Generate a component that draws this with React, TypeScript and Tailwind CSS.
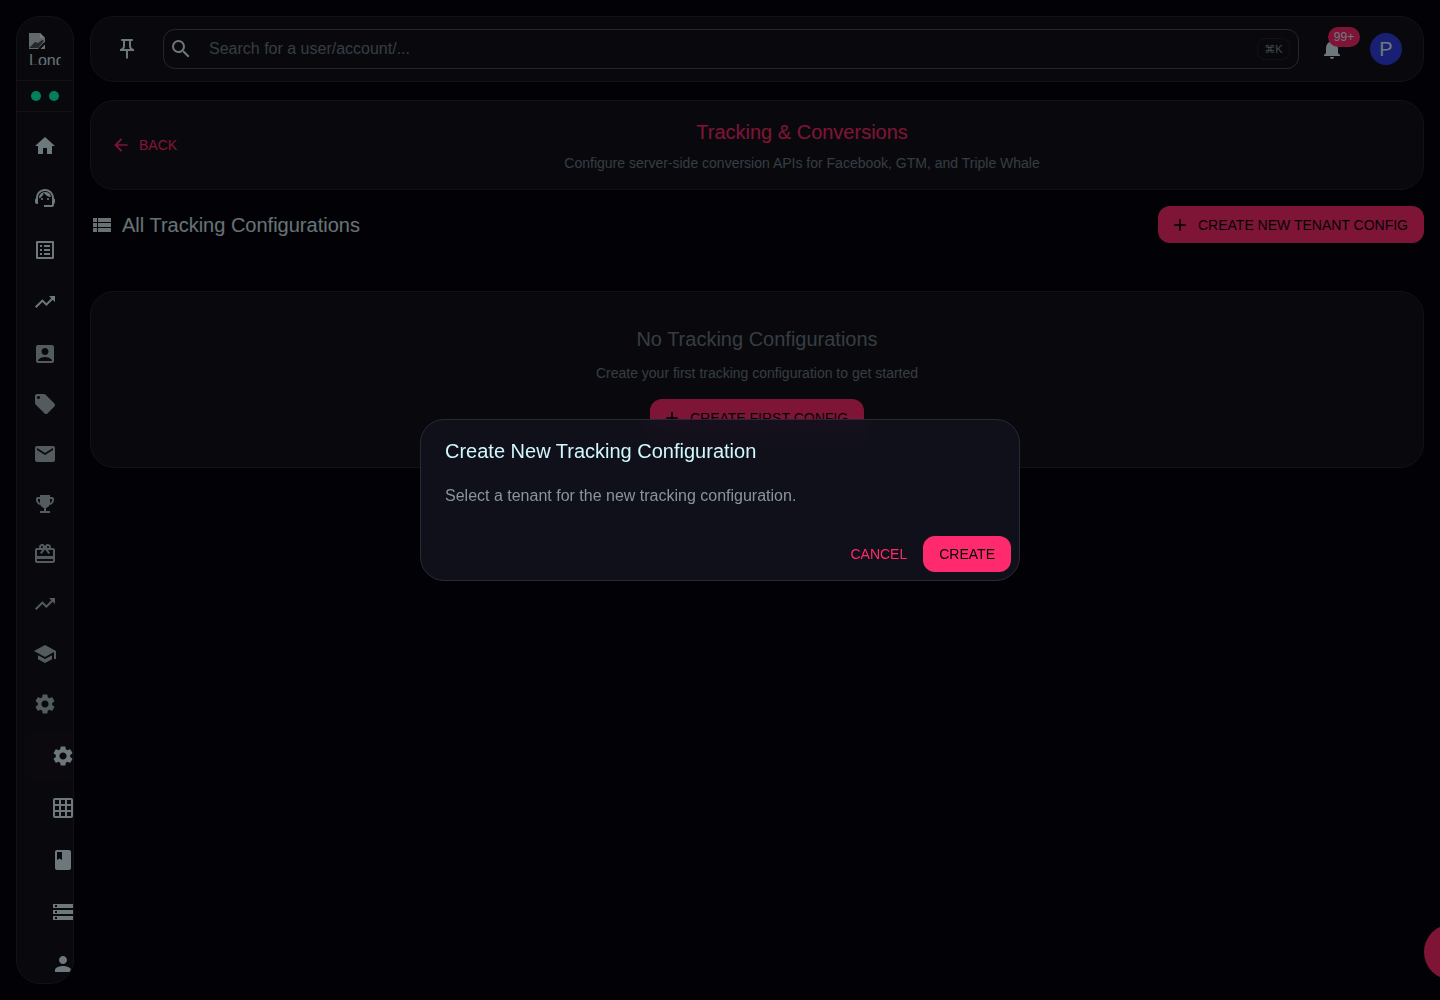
import type { ReactNode } from 'react';
import type { IconType } from 'react-icons';
import {
  MdAccountBox,
  MdAdd,
  MdArrowBack,
  MdBook,
  MdCardGiftcard,
  MdEmail,
  MdEmojiEvents,
  MdGridOn,
  MdHome,
  MdListAlt,
  MdLocalOffer,
  MdNotifications,
  MdOutlinePushPin,
  MdPerson,
  MdSchool,
  MdSearch,
  MdSettings,
  MdStorage,
  MdSupportAgent,
  MdTrendingUp,
  MdViewList,
} from 'react-icons/md';

type NavItem = { label: string; icon: IconType };

const mainLinks: NavItem[] = [
  { label: 'Home', icon: MdHome },
  { label: 'Support', icon: MdSupportAgent },
  { label: 'Reports', icon: MdListAlt },
  { label: 'Trends', icon: MdTrendingUp },
];

const groupLinks: NavItem[] = [
  { label: 'Accounts', icon: MdAccountBox },
  { label: 'Offers', icon: MdLocalOffer },
  { label: 'Email', icon: MdEmail },
  { label: 'Competitions', icon: MdEmojiEvents },
  { label: 'Rewards', icon: MdCardGiftcard },
  { label: 'Performance', icon: MdTrendingUp },
  { label: 'Academy', icon: MdSchool },
  { label: 'Settings', icon: MdSettings },
];

const settingsLinks: NavItem[] = [
  { label: 'General', icon: MdSettings },
  { label: 'Tables', icon: MdGridOn },
  { label: 'Docs', icon: MdBook },
  { label: 'Storage', icon: MdStorage },
  { label: 'Users', icon: MdPerson },
];

function Panel({ className = '', children }: { className?: string; children: ReactNode }) {
  return (
    <section className={`rounded-3xl border border-[#22222c] bg-[#12121b] ${className}`}>
      {children}
    </section>
  );
}

function AddButton({ children }: { children: ReactNode }) {
  return (
    <button
      type="button"
      className="inline-flex h-[37px] items-center gap-2 rounded-xl bg-[#ff2a6d] pl-3 pr-4 text-sm whitespace-nowrap text-[#05050d]"
    >
      <MdAdd size={20} />
      {children}
    </button>
  );
}

function Logo() {
  return (
    <a href="#home" className="block h-8 w-8 overflow-hidden text-base leading-6 text-[#d1e4e8]">
      <svg width="16" height="16" viewBox="0 0 16 16" className="block">
        <path d="M0 0h11l5 5v4L10 16H0z" fill="#c3d0d6" />
        <path d="M11 0v5h5z" fill="#eaf6fa" />
        <path d="M0 15l6-6 3 1 4-3 2 1-6 7z" fill="#4a5257" />
        <path d="M10 16l6-7v7z" fill="#d5e2e6" />
        <path d="M10 16l6-6" stroke="#12121b" strokeWidth="2" />
      </svg>
      <span className="block">London</span>
    </a>
  );
}

function Sidebar() {
  return (
    <aside className="flex w-[58px] shrink-0 flex-col overflow-hidden rounded-3xl border border-[#22222c] bg-[#12121b]">
      <div className="flex h-16 shrink-0 justify-center border-b border-[#22222c] pt-4">
        <Logo />
      </div>
      <div className="flex h-[31px] shrink-0 items-center justify-center gap-2 border-b border-[#22222c]">
        <span className="h-[10px] w-[10px] rounded-full bg-[#05ffbe]" />
        <span className="h-[10px] w-[10px] rounded-full bg-[#05ffbe]" />
      </div>
      <nav className="flex min-h-0 flex-col overflow-hidden pt-[10px]">
        <div className="flex flex-col gap-1">
          {mainLinks.map(({ label, icon: Icon }) => (
            <a key={label} href="#nav" aria-label={label} className="flex h-12 items-center justify-center text-[#d8f1f8]">
              <Icon size={24} />
            </a>
          ))}
        </div>
        <div className="mt-1 flex flex-col gap-[2px]">
          {groupLinks.map(({ label, icon: Icon }) => (
            <a key={label} href="#nav" aria-label={label} className="flex h-12 shrink-0 items-center justify-center text-[#a6b6bc]">
              <Icon size={24} />
            </a>
          ))}
        </div>
        <div className="mt-1 ml-2 flex flex-col gap-1">
          {settingsLinks.map(({ label, icon: Icon }, i) => (
            <a
              key={label}
              href="#nav"
              aria-label={label}
              className={`flex h-12 shrink-0 items-center rounded-l-xl pl-[26px] text-[#d8f1f8] ${i === 0 ? 'bg-[#17131d]' : ''}`}
            >
              <Icon size={24} className="shrink-0" />
            </a>
          ))}
        </div>
      </nav>
    </aside>
  );
}

function TopBar() {
  return (
    <header className="flex items-center rounded-3xl border border-[#22222c] bg-[#12121b] py-3 pl-4 pr-[21px] text-[#d8f1f8]">
      <button type="button" aria-label="Pin sidebar" className="mr-4 flex h-10 w-10 items-center justify-center">
        <MdOutlinePushPin size={24} />
      </button>
      <div className="flex h-10 flex-1 items-center rounded-xl border border-[#4a4a54] pl-[5px] pr-2">
        <MdSearch size={24} className="shrink-0" />
        <input
          type="text"
          aria-label="Search"
          placeholder="Search for a user/account/..."
          className="ml-4 min-w-0 flex-1 bg-transparent text-base outline-none placeholder:text-[#6b7a85]"
        />
        <kbd className="flex h-[22px] w-[33px] items-center justify-center rounded-lg border border-[#22222c] font-[Liberation_Sans,DejaVu_Sans,sans-serif] text-[11px] text-[#7f8f96]">
          ⌘K
        </kbd>
      </div>
      <button type="button" aria-label="Notifications" className="relative ml-[13px] flex h-10 w-10 items-center justify-center">
        <MdNotifications size={24} />
        <span className="absolute -top-[2px] left-4 flex h-5 w-8 items-center justify-center rounded-full bg-[#ff2a6d] text-xs text-[#d8f1f8]">
          99+
        </span>
      </button>
      <button
        type="button"
        aria-label="Account"
        className="ml-[18px] flex h-8 w-8 items-center justify-center rounded-full bg-[#3240e6] text-xl leading-none"
      >
        P
      </button>
    </header>
  );
}

function CreateDialog() {
  return (
    <div className="fixed inset-0 z-20 flex items-center justify-center bg-black/50">
      <div
        role="dialog"
        aria-modal="true"
        aria-labelledby="create-title"
        className="w-full max-w-[600px] rounded-3xl border border-[#2a2a34] bg-[#11111b]/95 backdrop-blur-md"
      >
        <h2 id="create-title" className="px-6 pt-4 pb-[18px] text-xl leading-[30px] text-[#d1f7ff]">
          Create New Tracking Configuration
        </h2>
        <p className="px-6 pb-5 text-base leading-6 text-[#87959f]">
          Select a tenant for the new tracking configuration.
        </p>
        <div className="flex items-center justify-end gap-2 p-2">
          <button type="button" className="h-9 px-2 text-sm text-[#ff2a6d]">
            CANCEL
          </button>
          <button type="button" className="h-9 rounded-xl bg-[#ff2a6d] px-4 text-sm text-[#05050d]">
            CREATE
          </button>
        </div>
      </div>
    </div>
  );
}

export default function App() {
  return (
    <div className="flex h-screen gap-4 overflow-hidden bg-[#05050d] p-4 font-[Liberation_Sans,Arial,sans-serif]">
      <Sidebar />

      <div className="flex min-w-0 flex-1 flex-col">
        <TopBar />

        <main className="mt-[18px]">
          <Panel className="flex items-center gap-2 px-3 py-4">
            <a href="#back" className="flex h-9 items-center gap-2 px-2 text-sm text-[#ff2a6d]">
              <MdArrowBack size={20} />
              BACK
            </a>
            <div className="flex-1 text-center">
              <h1 className="text-xl leading-[30px] text-[#ff2a6d]">Tracking &amp; Conversions</h1>
              <p className="mt-[6px] text-sm leading-5 text-[#6b7a85]">
                Configure server-side conversion APIs for Facebook, GTM, and Triple Whale
              </p>
            </div>
          </Panel>

          <div className="mt-4 flex items-center justify-between">
            <h2 className="flex items-center gap-2 text-xl leading-[30px] text-[#d1e4ea]">
              <MdViewList size={24} />
              All Tracking Configurations
            </h2>
            <AddButton>CREATE NEW TENANT CONFIG</AddButton>
          </div>

          <Panel className="mt-12 flex flex-col items-center px-8 pt-8 pb-[31px] text-center">
            <h3 className="text-xl leading-[30px] text-[#6b7a85]">No Tracking Configurations</h3>
            <p className="mt-[9px] mb-4 text-sm leading-5 text-[#6b7a85]">
              Create your first tracking configuration to get started
            </p>
            <AddButton>CREATE FIRST CONFIG</AddButton>
          </Panel>
        </main>
      </div>

      <button
        type="button"
        aria-label="Open chat"
        className="fixed -right-10 bottom-5 z-10 h-14 w-14 rounded-full bg-[#ff2a6d]"
      />

      <CreateDialog />
    </div>
  );
}
